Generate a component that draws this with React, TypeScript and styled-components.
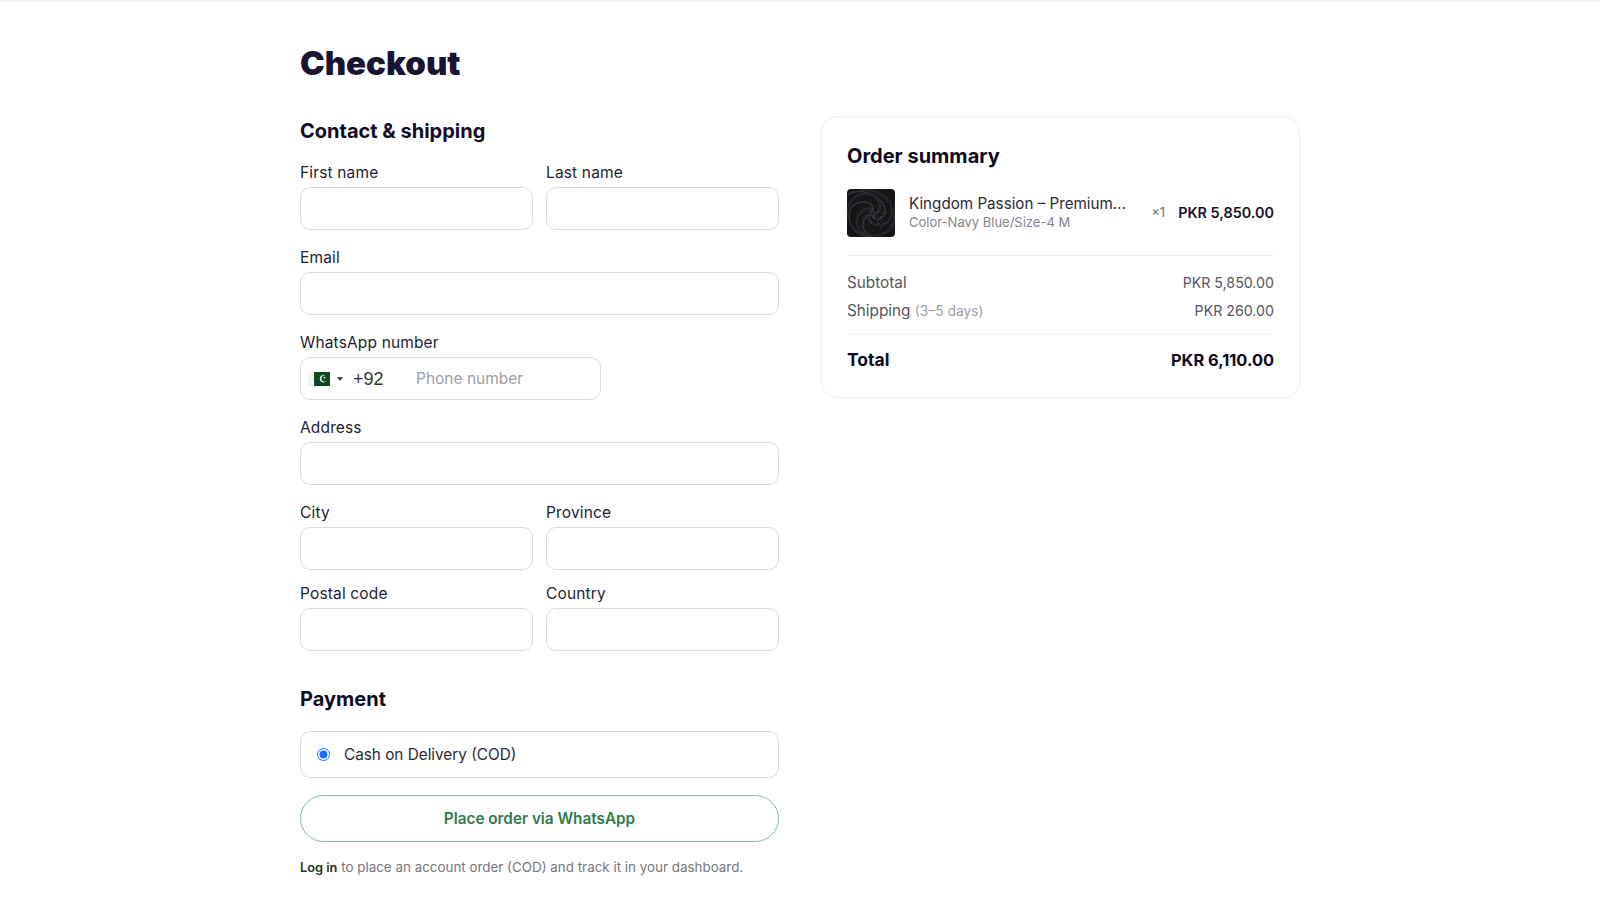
import styled, { createGlobalStyle } from "styled-components";

const GlobalStyle = createGlobalStyle`
  * { box-sizing: border-box; }
  html, body { margin: 0; background: #fff; }
  body { font-family: Inter, "Liberation Sans", sans-serif; color: #15122b; }
`;

const FlagIcon = () => (
  <svg width="22" height="14" viewBox="0 0 22 14">
    <rect width="6" height="14" fill="#f4f4f4" />
    <rect x="6" width="16" height="14" fill="#0b4a23" />
    <path d="M17.8 3.6a3.8 3.8 0 1 0 1 5 3.1 3.1 0 1 1-1-5z" fill="#f2f6f3" />
    <circle cx="16.6" cy="5.6" r="0.9" fill="#f2f6f3" />
  </svg>
);

// folds of the cloth: arms that curl in towards the centre of the swirl
const folds = [
  "M0 6C10 0 24 2 32 10s8 16 2 19-9-2-8-5",
  "M14 0c12 0 26 6 30 16s-2 20-12 20-12-7-9-11",
  "M48 14c2 12-2 26-12 31s-20 0-20-9 7-12 11-9",
  "M48 34C42 44 28 50 18 45S8 30 13 24s12-5 13-1",
  "M26 48C14 48 2 40 2 28S10 12 18 13s9 7 7 10",
  "M0 30C-2 18 6 6 16 5s18 6 17 13-7 8-9 6",
];

const FabricThumb = () => (
  <svg width="48" height="48" viewBox="0 0 48 48">
    <defs>
      <filter id="speckle" x="0" y="0" width="100%" height="100%">
        <feTurbulence type="fractalNoise" baseFrequency="1.1" numOctaves="2" seed="4" />
        <feColorMatrix values="0 0 0 0 0.6  0 0 0 0 0.6  0 0 0 0 0.62  1.6 0 0 0 -0.85" />
      </filter>
      <radialGradient id="speckleMask" cx="58%" cy="55%" r="42%">
        <stop offset="0%" stopColor="#fff" stopOpacity="0.9" />
        <stop offset="100%" stopColor="#fff" stopOpacity="0.08" />
      </radialGradient>
      <mask id="speckleArea">
        <rect width="48" height="48" fill="url(#speckleMask)" />
      </mask>
    </defs>
    <rect width="48" height="48" fill="#141416" />
    <g fill="none" strokeLinecap="round">
      {folds.map((d, i) => (
        <path key={d} d={d} stroke={i % 2 ? "#242428" : "#303035"} strokeWidth={i % 2 ? 2.6 : 1.6} />
      ))}
    </g>
    <rect width="48" height="48" filter="url(#speckle)" mask="url(#speckleArea)" />
  </svg>
);

export default function App() {
  return (
    <>
      <GlobalStyle />
      <TopEdge />
      <Page>
        <Title>Checkout</Title>
        <Columns>
          <FormColumn>
            <SectionTitle>Contact &amp; shipping</SectionTitle>
            <FieldRow>
              <Field>
                <Label>First name</Label>
                <TextInput />
              </Field>
              <Field>
                <Label>Last name</Label>
                <TextInput />
              </Field>
            </FieldRow>
            <FieldRow $single>
              <Field>
                <Label>Email</Label>
                <TextInput />
              </Field>
            </FieldRow>
            <FieldRow $single>
              <Field>
                <Label>WhatsApp number</Label>
                <PhoneBox>
                  <FlagIcon />
                  <Caret />
                  <DialCode>+92</DialCode>
                  <PhoneInput placeholder="Phone number" />
                </PhoneBox>
              </Field>
            </FieldRow>
            <FieldRow $single>
              <Field>
                <Label>Address</Label>
                <TextInput />
              </Field>
            </FieldRow>
            <FieldRow>
              <Field>
                <Label>City</Label>
                <TextInput />
              </Field>
              <Field>
                <Label>Province</Label>
                <TextInput />
              </Field>
            </FieldRow>
            <FieldRow $tight>
              <Field>
                <Label>Postal code</Label>
                <TextInput />
              </Field>
              <Field>
                <Label>Country</Label>
                <TextInput />
              </Field>
            </FieldRow>

            <PaymentTitle>Payment</PaymentTitle>
            <PaymentOption>
              <Radio type="radio" name="payment" defaultChecked />
              Cash on Delivery (COD)
            </PaymentOption>
            <PlaceOrder type="button">Place order via WhatsApp</PlaceOrder>
            <Note>
              <LoginLink href="#">Log in</LoginLink> to place an account order (COD) and track it in your dashboard.
            </Note>
          </FormColumn>

          <SummaryCard>
            <SummaryTitle>Order summary</SummaryTitle>
            <ItemRow>
              <Thumb>
                <FabricThumb />
              </Thumb>
              <ItemText>
                <ItemName>Kingdom Passion – Premium…</ItemName>
                <ItemVariant>Color-Navy Blue/Size-4 M</ItemVariant>
              </ItemText>
              <ItemQty>×1</ItemQty>
              <ItemPrice>PKR 5,850.00</ItemPrice>
            </ItemRow>
            <Totals>
              <TotalLine>
                <span>Subtotal</span>
                <Amount>PKR 5,850.00</Amount>
              </TotalLine>
              <TotalLine>
                <span>
                  Shipping <Muted>(3–5 days)</Muted>
                </span>
                <Amount>PKR 260.00</Amount>
              </TotalLine>
            </Totals>
            <GrandTotal>
              <span>Total</span>
              <GrandAmount>PKR 6,110.00</GrandAmount>
            </GrandTotal>
          </SummaryCard>
        </Columns>
      </Page>
    </>
  );
}

const TopEdge = styled.div`
  height: 2px;
  background: linear-gradient(#ececec, #f8f8f8);
`;

const Page = styled.main`
  width: 1000px;
  height: 921px;
  margin: 0 auto;
  padding-top: 42px;
  overflow: hidden;
`;

const Title = styled.h1`
  margin: 0;
  height: 38px;
  font-size: 33px;
  line-height: 38px;
  font-weight: 900;
  color: #1a1433;
`;

const Columns = styled.div`
  display: grid;
  grid-template-columns: 479px 479px;
  column-gap: 42px;
  align-items: start;
  margin-top: 34px;
`;

const FormColumn = styled.form`
  display: flex;
  flex-direction: column;
`;

const SectionTitle = styled.h2`
  margin: 0;
  padding-top: 1px;
  height: 45px;
  font-size: 20px;
  line-height: 28px;
  font-weight: 700;
  color: #100c26;
`;

const PaymentTitle = styled(SectionTitle)`
  margin-top: 32px;
  height: 48px;
  padding-top: 2px;
`;

const FieldRow = styled.div<{ $single?: boolean; $tight?: boolean }>`
  display: grid;
  grid-template-columns: ${({ $single }) => ($single ? "1fr" : "233px 233px")};
  column-gap: 13px;
  margin-top: ${({ $tight }) => ($tight ? "12px" : "16px")};

  &:nth-child(2) {
    margin-top: 0;
  }
`;

const Field = styled.label`
  display: flex;
  flex-direction: column;
`;

const Label = styled.span`
  height: 26px;
  padding: 1px 0 3px;
  font-size: 15.5px;
  line-height: 22px;
  letter-spacing: 0.15px;
  color: #1f1c33;
`;

const TextInput = styled.input`
  width: 100%;
  height: 43px;
  padding: 0 12px;
  border: 1px solid #dcdcdf;
  border-radius: 10px;
  outline: none;
  background: #fff;
  font: inherit;
`;

const PhoneBox = styled.div`
  display: flex;
  align-items: center;
  width: 301px;
  height: 43px;
  padding-left: 7px;
  border: 1px solid #dcdcdf;
  border-radius: 10px;
`;

const Caret = styled.span`
  width: 0;
  height: 0;
  margin-left: 7px;
  border-left: 3px solid transparent;
  border-right: 3px solid transparent;
  border-top: 4px solid #444;
`;

const DialCode = styled.span`
  margin-left: 10px;
  padding-top: 1px;
  width: 63px;
  font-family: "Liberation Sans", sans-serif;
  font-size: 18px;
  color: #333;
`;

const PhoneInput = styled.input`
  flex: 1;
  min-width: 0;
  height: 100%;
  padding: 0;
  border: 0;
  outline: none;
  background: transparent;
  font: inherit;
  font-size: 15.5px;

  &::placeholder {
    color: #a0a0a6;
    opacity: 1;
  }
`;

const PaymentOption = styled.label`
  display: flex;
  align-items: center;
  height: 47px;
  padding-left: 16px;
  border: 1px solid #dcdcdf;
  border-radius: 10px;
  font-size: 15.3px;
  color: #2b2838;
`;

const Radio = styled.input`
  width: 13px;
  height: 13px;
  margin: 0 14px 0 0;
  accent-color: #1a6dff;
`;

const PlaceOrder = styled.button`
  height: 47px;
  margin-top: 17px;
  border: 1px solid #7fc096;
  border-radius: 24px;
  background: #fff;
  font: inherit;
  font-size: 15.3px;
  font-weight: 600;
  color: #2f7a4e;
`;

const Note = styled.p`
  margin: 16px 0 0;
  font-size: 13.4px;
  line-height: 18px;
  color: #77767e;
`;

const LoginLink = styled.a`
  font-size: 12.8px;
  font-weight: 600;
  color: #1d3325;
  text-decoration: none;
`;

const SummaryCard = styled.aside`
  height: 282px;
  padding: 25px;
  border: 1px solid #ececee;
  border-radius: 16px;
  background: #fff;
`;

const SummaryTitle = styled.h2`
  margin: 0;
  font-size: 20px;
  line-height: 28px;
  font-weight: 700;
  color: #0d0a20;
`;

const ItemRow = styled.div`
  display: flex;
  align-items: center;
  box-sizing: content-box;
  height: 49px;
  margin-top: 18px;
  padding-bottom: 18px;
  border-bottom: 1px solid #eeeeef;
`;

const Thumb = styled.div`
  flex: none;
  width: 48px;
  height: 48px;
  margin-right: 14px;
  border-radius: 4px;
  overflow: hidden;

  svg {
    display: block;
  }
`;

const ItemText = styled.div`
  width: 218px;
  min-width: 0;
`;

const ItemName = styled.div`
  white-space: nowrap;
  font-size: 15.2px;
  line-height: 18px;
  color: #2c2a3a;
`;

const ItemVariant = styled.div`
  font-size: 13px;
  line-height: 18px;
  color: #85858c;
`;

const ItemQty = styled.span`
  margin-left: auto;
  margin-bottom: 1px;
  font-size: 13px;
  color: #6f6f76;
`;

const ItemPrice = styled.span`
  margin-left: 13px;
  margin-bottom: 1px;
  font-size: 14.4px;
  font-weight: 600;
  color: #15122b;
`;

const Totals = styled.div`
  display: flex;
  flex-direction: column;
  gap: 6px;
  padding: 16px 0 12px;
  border-bottom: 1px solid #eeeeef;
`;

const TotalLine = styled.div`
  display: flex;
  justify-content: space-between;
  font-size: 15.3px;
  line-height: 22px;
  color: #58565f;
`;

const Amount = styled.span`
  font-size: 14.2px;
`;

const Muted = styled.span`
  font-size: 13.8px;
  color: #a0a0a5;
`;

const GrandTotal = styled.div`
  display: flex;
  justify-content: space-between;
  margin-top: 13px;
  font-size: 17.5px;
  line-height: 24px;
  font-weight: 700;
  color: #0d0a20;
`;

const GrandAmount = styled.span`
  font-size: 16.4px;
`;
